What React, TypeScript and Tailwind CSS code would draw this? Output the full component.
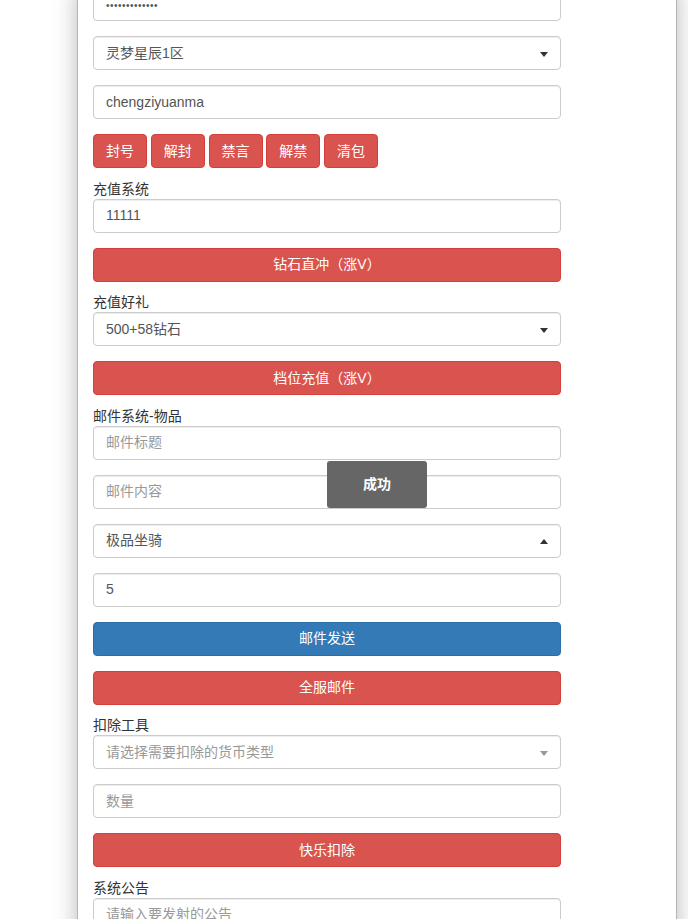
import React from "react";

const font = { fontFamily: '"Liberation Sans", "Noto Sans CJK SC", sans-serif' };

function Field({ children, placeholder, arrow, className = "" }: { children?: React.ReactNode; placeholder?: string; arrow?: "down" | "up" | "gray"; className?: string }) {
  return (
    <div className={"relative flex h-[34px] items-center rounded-[4px] border border-[#ccc] bg-white px-3 text-[14px] shadow-[inset_0_1px_1px_rgba(0,0,0,0.075)] " + className}>
      {children !== undefined ? <span className="text-[#555]">{children}</span> : <span className="text-[#999]">{placeholder}</span>}
      {arrow === "down" && <span className="absolute right-[12px] top-[15px] h-0 w-0 border-x-[4px] border-t-[5px] border-x-transparent border-t-[#333]" />}
      {arrow === "gray" && <span className="absolute right-[12px] top-[15px] h-0 w-0 border-x-[4px] border-t-[5px] border-x-transparent border-t-[#999]" />}
      {arrow === "up" && <span className="absolute right-[12px] top-[14px] h-0 w-0 border-x-[4px] border-b-[5px] border-x-transparent border-b-[#333]" />}
    </div>
  );
}

function Btn({ children, blue }: { children: React.ReactNode; blue?: boolean }) {
  return (
    <div className={"flex h-[34px] items-center justify-center rounded-[4px] border text-[14px] text-white " + (blue ? "border-[#2e6da4] bg-[#337ab7]" : "border-[#d43f3a] bg-[#d9534f]")}>
      {children}
    </div>
  );
}

function Label({ children }: { children: React.ReactNode }) {
  return <div className="mt-[11.5px] h-[19px] text-[14px] leading-[19px] text-[#333]">{children}</div>;
}

export default function App() {
  return (
    <div className="relative h-[919px] overflow-hidden bg-white" style={font}>
      <div className="ml-[77px] h-[960px] w-[600px] border-x border-[#b5b5b5] bg-white pl-[15px] shadow-[0_0_22px_rgba(0,0,0,0.28)]">
        <div className="mt-[-13px] flex w-[468px] flex-col">
          <Field>
            <span className="text-[10px] tracking-[0.5px] text-[#555]">•••••••••••••</span>
          </Field>
          <div className="h-[15px]" />
          <Field arrow="down">灵梦星辰1区</Field>
          <div className="h-[15px]" />
          <Field>chengziyuanma</Field>
          <div className="h-[15px]" />
          <div className="flex gap-[3.75px]">
            {["封号", "解封", "禁言", "解禁", "清包"].map((t) => (
              <div key={t} className="flex h-[34px] w-[54px] items-center justify-center rounded-[4px] border border-[#d43f3a] bg-[#d9534f] text-[14px] text-white">
                {t}
              </div>
            ))}
          </div>
          <Label>充值系统</Label>
          <Field>11111</Field>
          <div className="h-[15px]" />
          <Btn>钻石直冲（涨V）</Btn>
          <Label>充值好礼</Label>
          <Field arrow="down">500+58钻石</Field>
          <div className="h-[15px]" />
          <Btn>档位充值（涨V）</Btn>
          <Label>邮件系统-物品</Label>
          <Field placeholder="邮件标题" />
          <div className="h-[15px]" />
          <Field placeholder="邮件内容" />
          <div className="h-[15px]" />
          <Field arrow="up">极品坐骑</Field>
          <div className="h-[15px]" />
          <Field>5</Field>
          <div className="h-[15px]" />
          <Btn blue>邮件发送</Btn>
          <div className="h-[15px]" />
          <Btn>全服邮件</Btn>
          <Label>扣除工具</Label>
          <Field placeholder="请选择需要扣除的货币类型" arrow="gray" />
          <div className="h-[15px]" />
          <Field placeholder="数量" />
          <div className="h-[15px]" />
          <Btn>快乐扣除</Btn>
          <Label>系统公告</Label>
          <Field placeholder="请输入要发射的公告" />
        </div>
      </div>
      <div className="absolute left-[327px] top-[461px] flex h-[47px] w-[100px] items-start justify-center rounded-[3px] bg-[#666] pt-[15px] text-[14px] font-bold leading-[17px] text-white">
        成功
      </div>
    </div>
  );
}
